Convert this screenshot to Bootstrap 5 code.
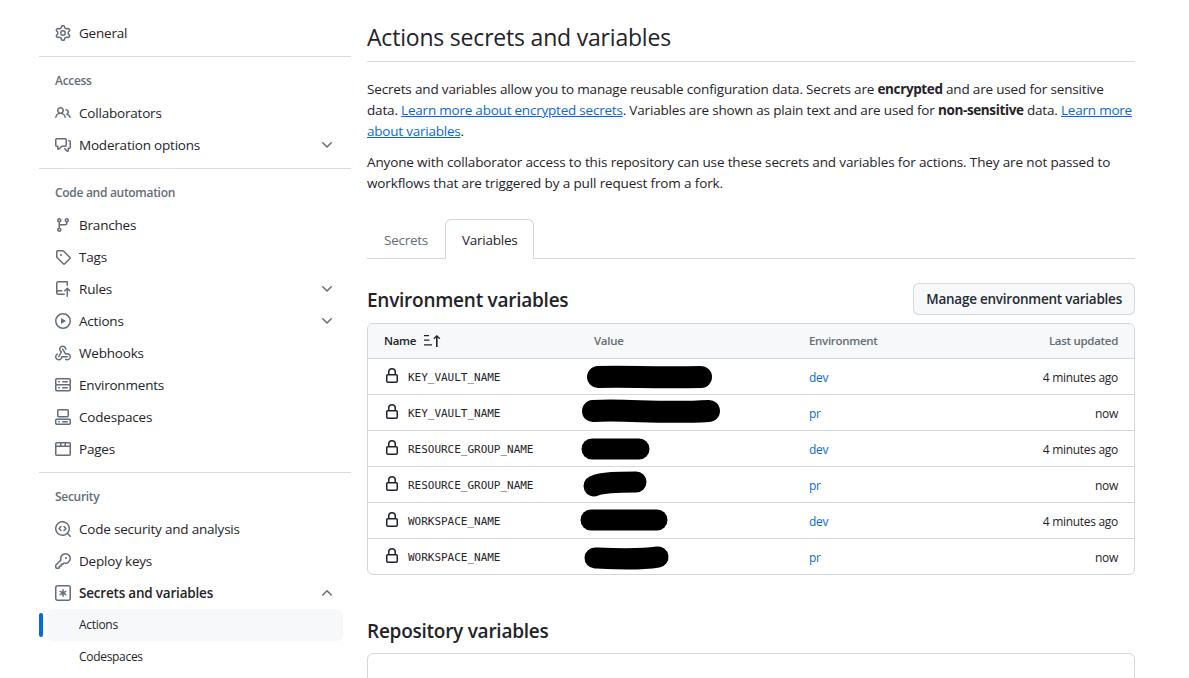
<!DOCTYPE html>
<html lang="en">
<head>
<meta charset="utf-8">
<title>Actions secrets and variables</title>
<link href="https://cdn.jsdelivr.net/npm/bootstrap@5.3.0/dist/css/bootstrap.min.css" rel="stylesheet">
<style>
html,body{height:678px;overflow:hidden;background:#fff}
body{font-family:"Open Sans","Noto Sans",sans-serif;font-size:13.5px;letter-spacing:-.2px;color:#1f2328;line-height:21px}
.page-wrap{padding:17px 54px 0 39px;gap:16px}
.side{width:312px;flex:none}
.main-col{flex:1 1 0;min-width:0;margin-top:3px}
.side-item{height:32px;padding:0 8px 0 16px;gap:8px;color:#1f2328;text-decoration:none;position:relative}
.side-item svg{fill:#656d76;flex:none}
.side-item .chev{margin-left:auto;margin-right:8px}
.side-sub{font-size:12px;letter-spacing:-.3px;margin-left:8px;margin-right:8px;padding-left:32px;padding-bottom:1px;border-radius:6px}
.side-sub.on{background:#f6f8fa}
.side-sub.on::before{content:"";position:absolute;left:-8px;top:4px;width:4px;height:24px;border-radius:6px;background:#0969da}
.side-rule{border-top:1px solid #d8dee4;margin:7px 0 0}
.side-head{font-size:12px;font-weight:600;color:#656d76;margin:0;padding:16px 16px 0;height:40px;line-height:16px;letter-spacing:-.3px}
.side-item.strong{font-weight:600}
.page-title{font-size:23px;font-weight:400;line-height:34px;margin:0;padding-bottom:7px;border-bottom:1px solid #d8dee4;letter-spacing:-.2px}
.intro{margin:17px 0 10px;letter-spacing:-.17px}
.intro a{letter-spacing:-.22px}
.intro strong{letter-spacing:-.38px}
.intro-b{margin:0 0 25px;letter-spacing:-.135px}
.intro a,.env-link{color:#0969da}
.tab-row{border-bottom:1px solid #d0d7de;height:40px}
.tab-row .nav-link{color:#656d76;padding:0 16px;height:40px;line-height:41px;border:1px solid transparent;border-radius:6px 6px 0 0;margin:0;letter-spacing:-.25px}
.tab-row .nav-link.active{color:#1f2328;border-color:#d0d7de #d0d7de #fff;background:#fff}
.sub-title{font-size:19px;font-weight:600;line-height:30px;margin:0;letter-spacing:-.25px}
.head-row{margin-top:24px;height:32px}
.head-row .sub-title{padding-top:2px}
.manage-btn{height:32px;padding:0 12px;font-size:13.5px;font-weight:600;background:#f6f8fa;border:1px solid rgba(31,35,40,.15);border-radius:6px;color:#24292f;line-height:30px;letter-spacing:-.24px}
.tbl-box{border:1px solid #d0d7de;border-radius:6px;margin-top:8px;position:relative;overflow:hidden}
.env-table{table-layout:fixed;margin:0;font-size:12px;color:#1f2328;--bs-table-color:#1f2328;letter-spacing:-.3px}
.env-table th,.env-table td{height:36px;padding:0 16px;vertical-align:middle;border-bottom:1px solid #d0d7de;line-height:18px}
.env-table td:nth-child(n+3){padding-top:4px}
.env-table tr:last-child td{border-bottom:0;height:36px}
.env-table th{background:#f6f8fa;height:34px;padding-top:1px;font-size:11.5px;letter-spacing:-.3px;font-weight:600;color:#656d76;--bs-table-bg:#f6f8fa}
.env-table th.sorted{color:#1f2328}
.w-a{width:210px}.w-b{width:215px}.w-c{width:170px}
.lock-cell{gap:8px}
.lock-cell svg{fill:#1f2328;flex:none}
.var-name{font-family:"DejaVu Sans Mono","Liberation Mono",monospace;font-size:11px;letter-spacing:-.02px;color:#1f2328;padding-top:4px}
.env-link{text-decoration:none}
.ink{position:absolute;left:0;top:0;width:766px;height:250px;pointer-events:none}
.ink path{stroke:#000;fill:none;stroke-linecap:round;stroke-linejoin:round}
.repo-title{margin-top:41px}
.repo-box{border:1px solid #d0d7de;border-radius:6px;height:60px;margin-top:7px}
</style>
</head>
<body>
<div class="d-flex page-wrap">
  <nav class="side">
    <a class="side-item d-flex align-items-center" href="#"><svg width="16" height="16" viewBox="0 0 16 16"><path d="M8 0a8.2 8.2 0 0 1 .701.031C9.444.095 9.99.645 10.16 1.29l.288 1.107c.018.066.079.158.212.224.231.114.454.243.668.386.123.082.233.09.299.071l1.103-.303c.644-.176 1.392.021 1.82.63.27.385.506.792.704 1.218.315.675.111 1.422-.364 1.891l-.814.806c-.049.048-.098.147-.088.294.016.257.016.515 0 .772-.01.147.038.246.088.294l.814.806c.475.469.679 1.216.364 1.891a7.977 7.977 0 0 1-.704 1.217c-.428.61-1.176.807-1.82.63l-1.102-.302c-.067-.019-.177-.011-.3.071a5.909 5.909 0 0 1-.668.386c-.133.066-.194.158-.211.224l-.29 1.106c-.168.646-.715 1.196-1.458 1.26a8.006 8.006 0 0 1-1.402 0c-.743-.064-1.289-.614-1.458-1.26l-.289-1.106c-.018-.066-.079-.158-.212-.224a5.738 5.738 0 0 1-.668-.386c-.123-.082-.233-.09-.299-.071l-1.103.303c-.644.176-1.392-.021-1.82-.63a8.12 8.12 0 0 1-.704-1.218c-.315-.675-.111-1.422.363-1.891l.815-.806c.05-.048.098-.147.088-.294a6.214 6.214 0 0 1 0-.772c.01-.147-.038-.246-.088-.294l-.815-.806C.635 6.045.431 5.298.746 4.623a7.92 7.92 0 0 1 .704-1.217c.428-.61 1.176-.807 1.82-.63l1.102.302c.067.019.177.011.3-.071.214-.143.437-.272.668-.386.133-.066.194-.158.211-.224l.29-1.106C6.009.645 6.556.095 7.299.03 7.53.01 7.764 0 8 0Zm-.571 1.525c-.036.003-.108.036-.137.146l-.289 1.105c-.147.561-.549.967-.998 1.189-.173.086-.34.183-.5.29-.417.278-.97.423-1.529.27l-1.103-.303c-.109-.03-.175.016-.195.045-.22.312-.412.644-.573.99-.014.031-.021.11.059.19l.815.806c.411.406.562.957.53 1.456a4.709 4.709 0 0 0 0 .582c.032.499-.119 1.05-.53 1.456l-.815.806c-.081.08-.073.159-.059.19.162.346.353.677.573.989.02.03.085.076.195.046l1.102-.303c.56-.153 1.113-.008 1.53.27.161.107.328.204.501.29.447.222.85.629.997 1.189l.289 1.105c.029.109.101.143.137.146a6.6 6.6 0 0 0 1.142 0c.036-.003.108-.036.137-.146l.289-1.105c.147-.561.549-.967.998-1.189.173-.086.34-.183.5-.29.417-.278.97-.423 1.529-.27l1.103.303c.109.029.175-.016.195-.045.22-.313.411-.644.573-.99.014-.031.021-.11-.059-.19l-.815-.806c-.411-.406-.562-.957-.53-1.456a4.709 4.709 0 0 0 0-.582c-.032-.499.119-1.05.53-1.456l.815-.806c.081-.08.073-.159.059-.19a6.464 6.464 0 0 0-.573-.989c-.02-.03-.085-.076-.195-.046l-1.102.303c-.56.153-1.113.008-1.53-.27a4.44 4.44 0 0 0-.501-.29c-.447-.222-.85-.629-.997-1.189l-.289-1.105c-.029-.11-.101-.143-.137-.146a6.6 6.6 0 0 0-1.142 0ZM11 8a3 3 0 1 1-6 0 3 3 0 0 1 6 0ZM9.5 8a1.5 1.5 0 1 0-3.001.001A1.5 1.5 0 0 0 9.5 8Z"/></svg>General</a>
    <div class="side-rule"></div>
    <h3 class="side-head">Access</h3>
    <a class="side-item d-flex align-items-center" href="#"><svg width="16" height="16" viewBox="0 0 16 16"><path d="M2 5.5a3.5 3.5 0 1 1 5.898 2.549 5.508 5.508 0 0 1 3.034 4.084.75.75 0 1 1-1.482.235 4 4 0 0 0-7.9 0 .75.75 0 0 1-1.482-.236A5.507 5.507 0 0 1 3.102 8.05 3.493 3.493 0 0 1 2 5.5ZM11 4a3.001 3.001 0 0 1 2.22 5.018 5.01 5.01 0 0 1 2.56 3.012.749.749 0 0 1-.885.954.752.752 0 0 1-.549-.514 3.507 3.507 0 0 0-2.522-2.372.75.75 0 0 1-.574-.73v-.352a.75.75 0 0 1 .416-.672A1.5 1.5 0 0 0 11 5.5.75.75 0 0 1 11 4Zm-5.5-.5a2 2 0 1 0-.001 3.999A2 2 0 0 0 5.5 3.5Z"/></svg>Collaborators</a>
    <a class="side-item d-flex align-items-center" href="#"><svg width="16" height="16" viewBox="0 0 16 16"><path d="M1.75 1h8.5c.966 0 1.75.784 1.75 1.75v5.5A1.75 1.75 0 0 1 10.25 10H7.061l-2.574 2.573A1.458 1.458 0 0 1 2 11.543V10h-.25A1.75 1.75 0 0 1 0 8.25v-5.5C0 1.784.784 1 1.75 1ZM1.5 2.75v5.5c0 .138.112.25.25.25h1a.75.75 0 0 1 .75.75v2.19l2.72-2.72a.749.749 0 0 1 .53-.22h3.5a.25.25 0 0 0 .25-.25v-5.5a.25.25 0 0 0-.25-.25h-8.5a.25.25 0 0 0-.25.25Zm13 2a.25.25 0 0 0-.25-.25h-.5a.75.75 0 0 1 0-1.5h.5c.966 0 1.75.784 1.75 1.75v5.5A1.75 1.75 0 0 1 14.25 12H14v1.543a1.458 1.458 0 0 1-2.487 1.03L9.22 12.28a.749.749 0 0 1 .326-1.275.749.749 0 0 1 .734.215l2.22 2.22v-2.19a.75.75 0 0 1 .75-.75h1a.25.25 0 0 0 .25-.25Z"/></svg>Moderation options<svg class="chev" width="16" height="16" viewBox="0 0 16 16"><path d="M12.78 5.22a.749.749 0 0 1 0 1.06l-4.25 4.25a.749.749 0 0 1-1.06 0L3.22 6.28a.749.749 0 1 1 1.06-1.06L8 8.939l3.72-3.719a.749.749 0 0 1 1.06 0Z"/></svg></a>
    <div class="side-rule"></div>
    <h3 class="side-head">Code and automation</h3>
    <a class="side-item d-flex align-items-center" href="#"><svg width="16" height="16" viewBox="0 0 16 16"><path d="M9.5 3.25a2.25 2.25 0 1 1 3 2.122V6A2.5 2.5 0 0 1 10 8.5H6a1 1 0 0 0-1 1v1.128a2.251 2.251 0 1 1-1.5 0V5.372a2.25 2.25 0 1 1 1.5 0v1.836A2.493 2.493 0 0 1 6 7h4a1 1 0 0 0 1-1v-.628A2.25 2.25 0 0 1 9.5 3.25Zm-6 0a.75.75 0 1 0 1.5 0 .75.75 0 0 0-1.5 0Zm8.25-.75a.75.75 0 1 0 0 1.5.75.75 0 0 0 0-1.5ZM4.25 12a.75.75 0 1 0 0 1.5.75.75 0 0 0 0-1.5Z"/></svg>Branches</a>
    <a class="side-item d-flex align-items-center" href="#"><svg width="16" height="16" viewBox="0 0 16 16"><path d="M1 7.775V2.75C1 1.784 1.784 1 2.75 1h5.025c.464 0 .91.184 1.238.513l6.25 6.25a1.75 1.75 0 0 1 0 2.474l-5.026 5.026a1.75 1.75 0 0 1-2.474 0l-6.25-6.25A1.752 1.752 0 0 1 1 7.775Zm1.5 0c0 .066.026.13.073.177l6.25 6.25a.25.25 0 0 0 .354 0l5.025-5.025a.25.25 0 0 0 0-.354l-6.25-6.25a.25.25 0 0 0-.177-.073H2.75a.25.25 0 0 0-.25.25ZM6 5a1 1 0 1 1 0 2 1 1 0 0 1 0-2Z"/></svg>Tags</a>
    <a class="side-item d-flex align-items-center" href="#"><svg width="16" height="16" viewBox="0 0 16 16"><path d="M1 2.5A2.5 2.5 0 0 1 3.5 0h8.75a.75.75 0 0 1 .75.75v3.5a.75.75 0 0 1-1.5 0V1.5h-8a1 1 0 0 0-1 1v6.708A2.493 2.493 0 0 1 3.5 9h3.25a.75.75 0 0 1 0 1.5H3.5a1 1 0 0 0 0 2h5.75a.75.75 0 0 1 0 1.5H3.5A2.5 2.5 0 0 1 1 11.5Zm13.23 7.79h-.001l-1.224-1.224v6.184a.75.75 0 0 1-1.5 0V9.066L10.28 10.29a.75.75 0 0 1-1.06-1.061l2.505-2.504a.75.75 0 0 1 1.06 0L15.29 9.23a.751.751 0 0 1-.018 1.042.751.751 0 0 1-1.042.018Z"/></svg>Rules<svg class="chev" width="16" height="16" viewBox="0 0 16 16"><path d="M12.78 5.22a.749.749 0 0 1 0 1.06l-4.25 4.25a.749.749 0 0 1-1.06 0L3.22 6.28a.749.749 0 1 1 1.06-1.06L8 8.939l3.72-3.719a.749.749 0 0 1 1.06 0Z"/></svg></a>
    <a class="side-item d-flex align-items-center" href="#"><svg width="16" height="16" viewBox="0 0 16 16"><path d="M8 0a8 8 0 1 1 0 16A8 8 0 0 1 8 0ZM1.5 8a6.5 6.5 0 1 0 13 0 6.5 6.5 0 0 0-13 0Zm4.879-2.773 4.264 2.559a.25.25 0 0 1 0 .428l-4.264 2.559A.25.25 0 0 1 6 10.559V5.442a.25.25 0 0 1 .379-.215Z"/></svg>Actions<svg class="chev" width="16" height="16" viewBox="0 0 16 16"><path d="M12.78 5.22a.749.749 0 0 1 0 1.06l-4.25 4.25a.749.749 0 0 1-1.06 0L3.22 6.28a.749.749 0 1 1 1.06-1.06L8 8.939l3.72-3.719a.749.749 0 0 1 1.06 0Z"/></svg></a>
    <a class="side-item d-flex align-items-center" href="#"><svg width="16" height="16" viewBox="0 0 16 16"><path d="M5.5 4.25a2.25 2.25 0 0 1 4.5 0 .75.75 0 0 0 1.5 0 3.75 3.75 0 1 0-6.14 2.889l-2.272 4.258a.75.75 0 0 0 1.324.706L7 7.25a.75.75 0 0 0-.309-1.015A2.25 2.25 0 0 1 5.5 4.25Z"/><path d="M7.364 3.607a.75.75 0 0 1 1.03.257l2.608 4.349a3.75 3.75 0 1 1-.628 6.785.75.75 0 0 1 .752-1.299 2.25 2.25 0 1 0-.033-3.88.75.75 0 0 1-1.03-.256L7.107 4.636a.75.75 0 0 1 .257-1.03Z"/><path d="M2.9 8.776A.75.75 0 0 1 2.625 9.8 2.25 2.25 0 1 0 6 11.75a.75.75 0 0 1 .75-.751h5.5a.75.75 0 0 1 0 1.5H7.425a3.751 3.751 0 1 1-5.55-3.998.75.75 0 0 1 1.024.274Z"/></svg>Webhooks</a>
    <a class="side-item d-flex align-items-center" href="#"><svg width="16" height="16" viewBox="0 0 16 16"><path d="M1.75 1h12.5c.966 0 1.75.784 1.75 1.75v4c0 .372-.116.717-.314 1 .198.283.314.628.314 1v4a1.75 1.75 0 0 1-1.75 1.75H1.75A1.75 1.75 0 0 1 0 12.75v-4c0-.358.109-.707.314-1a1.739 1.739 0 0 1-.314-1v-4C0 1.784.784 1 1.75 1ZM1.5 2.75v4c0 .138.112.25.25.25h12.5a.25.25 0 0 0 .25-.25v-4a.25.25 0 0 0-.25-.25H1.75a.25.25 0 0 0-.25.25Zm.25 5.75a.25.25 0 0 0-.25.25v4c0 .138.112.25.25.25h12.5a.25.25 0 0 0 .25-.25v-4a.25.25 0 0 0-.25-.25ZM7 4.75A.75.75 0 0 1 7.75 4h4.5a.75.75 0 0 1 0 1.5h-4.5A.75.75 0 0 1 7 4.75ZM7.75 10h4.5a.75.75 0 0 1 0 1.5h-4.5a.75.75 0 0 1 0-1.5ZM3 4.75A.75.75 0 0 1 3.75 4h.5a.75.75 0 0 1 0 1.5h-.5A.75.75 0 0 1 3 4.75ZM3.75 10h.5a.75.75 0 0 1 0 1.5h-.5a.75.75 0 0 1 0-1.5Z"/></svg>Environments</a>
    <a class="side-item d-flex align-items-center" href="#"><svg width="16" height="16" viewBox="0 0 16 16"><path d="M0 11.25c0-.966.784-1.75 1.75-1.75h12.5c.966 0 1.75.784 1.75 1.75v3A1.75 1.75 0 0 1 14.25 16H1.75A1.75 1.75 0 0 1 0 14.25Zm2-9.5C2 .784 2.784 0 3.75 0h8.5C13.216 0 14 .784 14 1.75v5a1.75 1.75 0 0 1-1.75 1.75h-8.5A1.75 1.75 0 0 1 2 6.75Zm1.75-.25a.25.25 0 0 0-.25.25v5c0 .138.112.25.25.25h8.5a.25.25 0 0 0 .25-.25v-5a.25.25 0 0 0-.25-.25Zm-2 9.5a.25.25 0 0 0-.25.25v3c0 .138.112.25.25.25h12.5a.25.25 0 0 0 .25-.25v-3a.25.25 0 0 0-.25-.25Z"/><path d="M7 12.75a.75.75 0 0 1 .75-.75h4.5a.75.75 0 0 1 0 1.5h-4.5a.75.75 0 0 1-.75-.75Zm-4 0a.75.75 0 0 1 .75-.75h.5a.75.75 0 0 1 0 1.5h-.5a.75.75 0 0 1-.75-.75Z"/></svg>Codespaces</a>
    <a class="side-item d-flex align-items-center" href="#"><svg width="16" height="16" viewBox="0 0 16 16"><path d="M0 2.75C0 1.784.784 1 1.75 1h12.5c.966 0 1.75.784 1.75 1.75v10.5A1.75 1.75 0 0 1 14.25 15H1.75A1.75 1.75 0 0 1 0 13.25ZM14.5 6h-13v7.25c0 .138.112.25.25.25h12.5a.25.25 0 0 0 .25-.25Zm0-3.25a.25.25 0 0 0-.25-.25H11v2h3.5ZM9.5 4.5v-2h-3v2ZM5 4.5v-2H1.75a.25.25 0 0 0-.25.25V4.5Z"/></svg>Pages</a>
    <div class="side-rule"></div>
    <h3 class="side-head">Security</h3>
    <a class="side-item d-flex align-items-center" href="#"><svg width="16" height="16" viewBox="0 0 16 16"><path d="M8.47 4.97a.75.75 0 0 0 0 1.06L9.94 7.5 8.47 8.97a.75.75 0 1 0 1.06 1.06l2-2a.75.75 0 0 0 0-1.06l-2-2a.75.75 0 0 0-1.06 0ZM6.53 6.03a.75.75 0 0 0-1.06-1.06l-2 2a.75.75 0 0 0 0 1.06l2 2a.75.75 0 1 0 1.06-1.06L5.06 7.5l1.47-1.47Z"/><path d="M12.246 13.307a7.501 7.501 0 1 1 1.06-1.06l2.474 2.473a.749.749 0 0 1-.326 1.275.749.749 0 0 1-.734-.215ZM1.5 7.5a6.002 6.002 0 0 0 3.608 5.504 6.002 6.002 0 0 0 6.486-1.117.748.748 0 0 1 .292-.293A6 6 0 1 0 1.5 7.5Z"/></svg>Code security and analysis</a>
    <a class="side-item d-flex align-items-center" href="#"><svg width="16" height="16" viewBox="0 0 16 16"><path d="M10.5 0a5.499 5.499 0 1 1-1.288 10.848l-.932.932a.749.749 0 0 1-.53.22H7v.75a.749.749 0 0 1-.22.53l-.5.5a.749.749 0 0 1-.53.22H5v.75a.749.749 0 0 1-.22.53l-.5.5a.749.749 0 0 1-.53.22h-2A1.75 1.75 0 0 1 0 14.25v-2c0-.199.079-.389.22-.53l4.932-4.932A5.5 5.5 0 0 1 10.5 0Zm-4 5.5c-.001.431.069.86.205 1.269a.75.75 0 0 1-.181.768L1.5 12.56v1.69c0 .138.112.25.25.25h1.69l.06-.06v-1.19a.75.75 0 0 1 .75-.75h1.19l.06-.06v-1.19a.75.75 0 0 1 .75-.75h1.19l1.023-1.025a.75.75 0 0 1 .768-.18A4 4 0 1 0 6.5 5.5ZM11 6a1 1 0 1 1 0-2 1 1 0 0 1 0 2Z"/></svg>Deploy keys</a>
    <a class="side-item strong d-flex align-items-center" href="#"><svg width="16" height="16" viewBox="0 0 16 16"><path d="M0 2.75A2.75 2.75 0 0 1 2.75 0h10.5A2.75 2.75 0 0 1 16 2.75v10.5A2.75 2.75 0 0 1 13.25 16H2.75A2.75 2.75 0 0 1 0 13.25ZM2.75 1.5c-.69 0-1.25.56-1.25 1.25v10.5c0 .69.56 1.25 1.25 1.25h10.5c.69 0 1.25-.56 1.25-1.25V2.75c0-.69-.56-1.25-1.25-1.25Z"/><path d="M8 4a.75.75 0 0 1 .75.75V6.7l1.69-.975a.75.75 0 0 1 .75 1.3L9.5 8l1.69.976a.75.75 0 0 1-.75 1.298L8.75 9.3v1.951a.75.75 0 0 1-1.5 0V9.299l-1.69.976a.75.75 0 0 1-.75-1.3L6.5 8l-1.69-.975a.75.75 0 0 1 .75-1.3l1.69.976V4.75A.75.75 0 0 1 8 4Z"/></svg>Secrets and variables<svg class="chev" width="16" height="16" viewBox="0 0 16 16"><path d="M3.22 10.53a.749.749 0 0 1 0-1.06l4.25-4.25a.749.749 0 0 1 1.06 0l4.25 4.25a.749.749 0 0 1-1.06 1.06L8 6.811 4.28 10.53a.749.749 0 0 1-1.06 0Z"/></svg></a>
    <a class="side-item side-sub on d-flex align-items-center" href="#">Actions</a>
    <a class="side-item side-sub d-flex align-items-center" href="#">Codespaces</a>
  </nav>
  <main class="main-col">
    <h1 class="page-title">Actions secrets and variables</h1>
    <p class="intro">Secrets and variables allow you to manage reusable configuration data. Secrets are <strong>encrypted</strong> and are used for sensitive data. <a href="#">Learn more about encrypted secrets</a>. Variables are shown as plain text and are used for <strong>non-sensitive</strong> data. <a href="#">Learn more about variables</a>.</p>
    <p class="intro-b">Anyone with collaborator access to this repository can use these secrets and variables for actions. They are not passed to workflows that are triggered by a pull request from a fork.</p>
    <ul class="nav tab-row">
      <li class="nav-item"><a class="nav-link" href="#">Secrets</a></li>
      <li class="nav-item"><a class="nav-link active" href="#">Variables</a></li>
    </ul>
    <div class="head-row d-flex justify-content-between align-items-center">
      <h2 class="sub-title">Environment variables</h2>
      <button class="btn manage-btn" type="button">Manage environment variables</button>
    </div>
    <div class="tbl-box">
      <table class="table env-table">
        <thead><tr>
          <th class="w-a sorted"><span class="d-flex align-items-center lock-cell">Name <svg width="18" height="14" viewBox="0 0 18 14"><path d="M0 1h5v1.2H0zM0 5.6h5.5v1.2H0zM0 10.2h8v1.2H0zM12 3.4 10.2 5.2l-.9-.9L12.8.9l3.5 3.4-.9.9L13.6 3.4V13H12z"/></svg></span></th>
          <th class="w-b">Value</th>
          <th class="w-c">Environment</th>
          <th class="text-end">Last updated</th>
        </tr></thead>
        <tbody>
          <tr><td><span class="d-flex align-items-center lock-cell"><svg width="16" height="16" viewBox="0 0 16 16"><path d="M4 4a4 4 0 0 1 8 0v2h.25c.966 0 1.75.784 1.75 1.75v5.5A1.75 1.75 0 0 1 12.25 15h-8.5A1.75 1.75 0 0 1 2 13.25v-5.5C2 6.784 2.784 6 3.75 6H4Zm8.25 3.5h-8.5a.25.25 0 0 0-.25.25v5.5c0 .138.112.25.25.25h8.5a.25.25 0 0 0 .25-.25v-5.5a.25.25 0 0 0-.25-.25ZM10.5 6V4a2.5 2.5 0 1 0-5 0v2Z"/></svg><span class="var-name">KEY_VAULT_NAME</span></span></td><td></td><td><a class="env-link" href="#">dev</a></td><td class="text-end">4 minutes ago</td></tr>
          <tr><td><span class="d-flex align-items-center lock-cell"><svg width="16" height="16" viewBox="0 0 16 16"><path d="M4 4a4 4 0 0 1 8 0v2h.25c.966 0 1.75.784 1.75 1.75v5.5A1.75 1.75 0 0 1 12.25 15h-8.5A1.75 1.75 0 0 1 2 13.25v-5.5C2 6.784 2.784 6 3.75 6H4Zm8.25 3.5h-8.5a.25.25 0 0 0-.25.25v5.5c0 .138.112.25.25.25h8.5a.25.25 0 0 0 .25-.25v-5.5a.25.25 0 0 0-.25-.25ZM10.5 6V4a2.5 2.5 0 1 0-5 0v2Z"/></svg><span class="var-name">KEY_VAULT_NAME</span></span></td><td></td><td><a class="env-link" href="#">pr</a></td><td class="text-end">now</td></tr>
          <tr><td><span class="d-flex align-items-center lock-cell"><svg width="16" height="16" viewBox="0 0 16 16"><path d="M4 4a4 4 0 0 1 8 0v2h.25c.966 0 1.75.784 1.75 1.75v5.5A1.75 1.75 0 0 1 12.25 15h-8.5A1.75 1.75 0 0 1 2 13.25v-5.5C2 6.784 2.784 6 3.75 6H4Zm8.25 3.5h-8.5a.25.25 0 0 0-.25.25v5.5c0 .138.112.25.25.25h8.5a.25.25 0 0 0 .25-.25v-5.5a.25.25 0 0 0-.25-.25ZM10.5 6V4a2.5 2.5 0 1 0-5 0v2Z"/></svg><span class="var-name">RESOURCE_GROUP_NAME</span></span></td><td></td><td><a class="env-link" href="#">dev</a></td><td class="text-end">4 minutes ago</td></tr>
          <tr><td><span class="d-flex align-items-center lock-cell"><svg width="16" height="16" viewBox="0 0 16 16"><path d="M4 4a4 4 0 0 1 8 0v2h.25c.966 0 1.75.784 1.75 1.75v5.5A1.75 1.75 0 0 1 12.25 15h-8.5A1.75 1.75 0 0 1 2 13.25v-5.5C2 6.784 2.784 6 3.75 6H4Zm8.25 3.5h-8.5a.25.25 0 0 0-.25.25v5.5c0 .138.112.25.25.25h8.5a.25.25 0 0 0 .25-.25v-5.5a.25.25 0 0 0-.25-.25ZM10.5 6V4a2.5 2.5 0 1 0-5 0v2Z"/></svg><span class="var-name">RESOURCE_GROUP_NAME</span></span></td><td></td><td><a class="env-link" href="#">pr</a></td><td class="text-end">now</td></tr>
          <tr><td><span class="d-flex align-items-center lock-cell"><svg width="16" height="16" viewBox="0 0 16 16"><path d="M4 4a4 4 0 0 1 8 0v2h.25c.966 0 1.75.784 1.75 1.75v5.5A1.75 1.75 0 0 1 12.25 15h-8.5A1.75 1.75 0 0 1 2 13.25v-5.5C2 6.784 2.784 6 3.75 6H4Zm8.25 3.5h-8.5a.25.25 0 0 0-.25.25v5.5c0 .138.112.25.25.25h8.5a.25.25 0 0 0 .25-.25v-5.5a.25.25 0 0 0-.25-.25ZM10.5 6V4a2.5 2.5 0 1 0-5 0v2Z"/></svg><span class="var-name">WORKSPACE_NAME</span></span></td><td></td><td><a class="env-link" href="#">dev</a></td><td class="text-end">4 minutes ago</td></tr>
          <tr><td><span class="d-flex align-items-center lock-cell"><svg width="16" height="16" viewBox="0 0 16 16"><path d="M4 4a4 4 0 0 1 8 0v2h.25c.966 0 1.75.784 1.75 1.75v5.5A1.75 1.75 0 0 1 12.25 15h-8.5A1.75 1.75 0 0 1 2 13.25v-5.5C2 6.784 2.784 6 3.75 6H4Zm8.25 3.5h-8.5a.25.25 0 0 0-.25.25v5.5c0 .138.112.25.25.25h8.5a.25.25 0 0 0 .25-.25v-5.5a.25.25 0 0 0-.25-.25ZM10.5 6V4a2.5 2.5 0 1 0-5 0v2Z"/></svg><span class="var-name">WORKSPACE_NAME</span></span></td><td></td><td><a class="env-link" href="#">pr</a></td><td class="text-end">now</td></tr>
        </tbody>
      </table>
      <svg class="ink" viewBox="0 0 766 250" aria-hidden="true">
        <path stroke-width="22" d="M230 53 C260 52 280 54 333 53"/>
        <path stroke-width="22" d="M225 87 C260 85 290 90 341 87"/>
        <path stroke-width="21" d="M224 125H271"/>
        <path stroke-width="21" d="M226 162 C235 158 250 158 268 158"/>
        <path stroke-width="21" d="M223 196H289"/>
        <path stroke-width="21" d="M227 234 C250 235 270 236 290 233"/>
      </svg>
    </div>
    <h2 class="sub-title repo-title">Repository variables</h2>
    <div class="repo-box"></div>
  </main>
</div>
</body>
</html>
